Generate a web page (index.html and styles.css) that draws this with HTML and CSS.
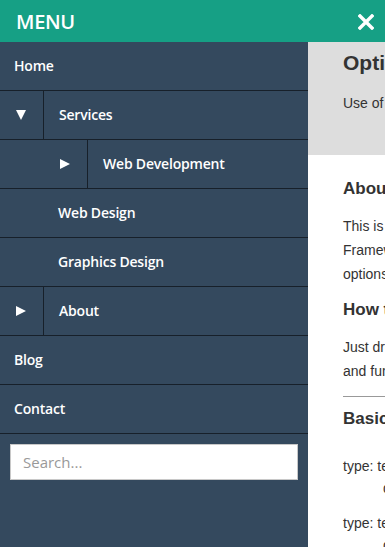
FILE: index.html
```html
<!DOCTYPE html>
<html>
<head>
    <title>Menu</title>
    <link rel="stylesheet" href="styles.css">
</head>
<body>
    <div class="topbar">
        <span class="topbar-title">MENU</span>
        <svg class="close" width="16" height="16" viewBox="0 0 16 16">
            <path d="M2 2 L14 14 M14 2 L2 14" stroke="#fff" stroke-width="3.4" stroke-linecap="square"/>
        </svg>
    </div>
    <div class="page">
        <nav class="menu">
            <div class="item"><span class="label">Home</span></div>
            <div class="item"><span class="toggle"><i class="tri-down"></i></span><span class="label">Services</span></div>
            <div class="item lvl2"><span class="toggle"><i class="tri-right"></i></span><span class="label">Web Development</span></div>
            <div class="item lvl2 plain"><span class="label">Web Design</span></div>
            <div class="item lvl2 plain"><span class="label">Graphics Design</span></div>
            <div class="item"><span class="toggle"><i class="tri-right"></i></span><span class="label">About</span></div>
            <div class="item"><span class="label">Blog</span></div>
            <div class="item"><span class="label">Contact</span></div>
            <div class="search-wrap">
                <input class="search" type="text" placeholder="Search...">
            </div>
        </nav>
        <main class="content">
            <section class="intro">
                <h1>Options</h1>
                <p>Use of options to customize the menu.</p>
            </section>
            <section class="body">
                <h2>About</h2>
                <p>This is a responsive menu plugin<br>Framework independent with many<br>options to configure.</p>
                <h2>How to use</h2>
                <p>Just drop in the files<br>and fun starts right away.</p>
                <hr>
                <h2>Basic options</h2>
                <div class="code">
                    <div>type: text</div>
                    <div class="indent">default</div>
                </div>
                <div class="code">
                    <div>type: text</div>
                    <div class="indent">default</div>
                </div>
            </section>
        </main>
    </div>
</body>
</html>
```

FILE: styles.css
```css
body {
    margin: 0;
    width: 385px;
    height: 547px;
    overflow: hidden;
    font-family: "Liberation Sans", Arial, sans-serif;
}
.topbar {
    height: 42px;
    background-color: #16a085;
    display: flex;
    align-items: center;
    justify-content: space-between;
    padding: 0 11px 0 16px;
    color: #fff;
}
.topbar-title {
    font-family: "Open Sans", sans-serif;
    font-weight: 600;
    font-size: 20px;
    letter-spacing: -0.3px;
}
.close {
    display: block;
    margin-top: 1px;
}
.page {
    display: flex;
    height: 505px;
}
.menu {
    width: 308px;
    flex-shrink: 0;
    background-color: #34495e;
    font-family: "Open Sans", sans-serif;
    font-weight: 600;
    font-size: 14px;
    letter-spacing: -0.2px;
    color: #fff;
}
.item {
    display: flex;
    height: 48px;
    border-bottom: 1px solid #17202a;
}
.item .label {
    line-height: 48px;
    padding-left: 14px;
}
.item .toggle {
    width: 44px;
    border-right: 1px solid #17202a;
    display: flex;
    align-items: center;
    justify-content: center;
    box-sizing: border-box;
    margin-right: 1px;
}
.item.lvl2 {
    padding-left: 44px;
}
.tri-down {
    width: 0;
    height: 0;
    border-left: 5px solid transparent;
    border-right: 5px solid transparent;
    border-top: 10px solid #fff;
    margin-right: 1px;
}
.tri-right {
    width: 0;
    height: 0;
    border-top: 5px solid transparent;
    border-bottom: 5px solid transparent;
    border-left: 10px solid #fff;
    margin-right: 1px;
}
.search-wrap {
    padding: 10px 10px;
}
.search {
    display: block;
    width: 100%;
    height: 36px;
    box-sizing: border-box;
    border: 1px solid #c8c8c8;
    padding: 0 12px;
    font-family: "Open Sans", sans-serif;
    font-size: 15px;
    color: #333;
    outline: none;
}
.search::placeholder {
    color: #999;
}
.content {
    flex: 1;
    min-width: 0;
    overflow: hidden;
    color: #333;
    font-size: 14px;
}
.intro, .body {
    width: 500px;
    padding: 0 35px;
}
.intro {
    background-color: #ddd;
    padding-top: 8px;
    padding-bottom: 40px;
}
.intro h1 {
    margin: 0;
    font-size: 21px;
    line-height: 25px;
}
.intro p {
    margin: 16px 0 0;
    line-height: 24px;
}
.body {
    padding-top: 23px;
}
.body h2 {
    margin: 0;
    font-size: 17px;
    line-height: 22px;
}
.body p {
    margin: 14px 0 13px;
    line-height: 24px;
}
.body hr {
    border: 0;
    border-top: 1px solid #999;
    margin: 12px 0 11px;
}
.code {
    margin-top: 25px;
    line-height: 22px;
}
.code + .code {
    margin-top: 13px;
}
.code .indent {
    padding-left: 40px;
}
```
